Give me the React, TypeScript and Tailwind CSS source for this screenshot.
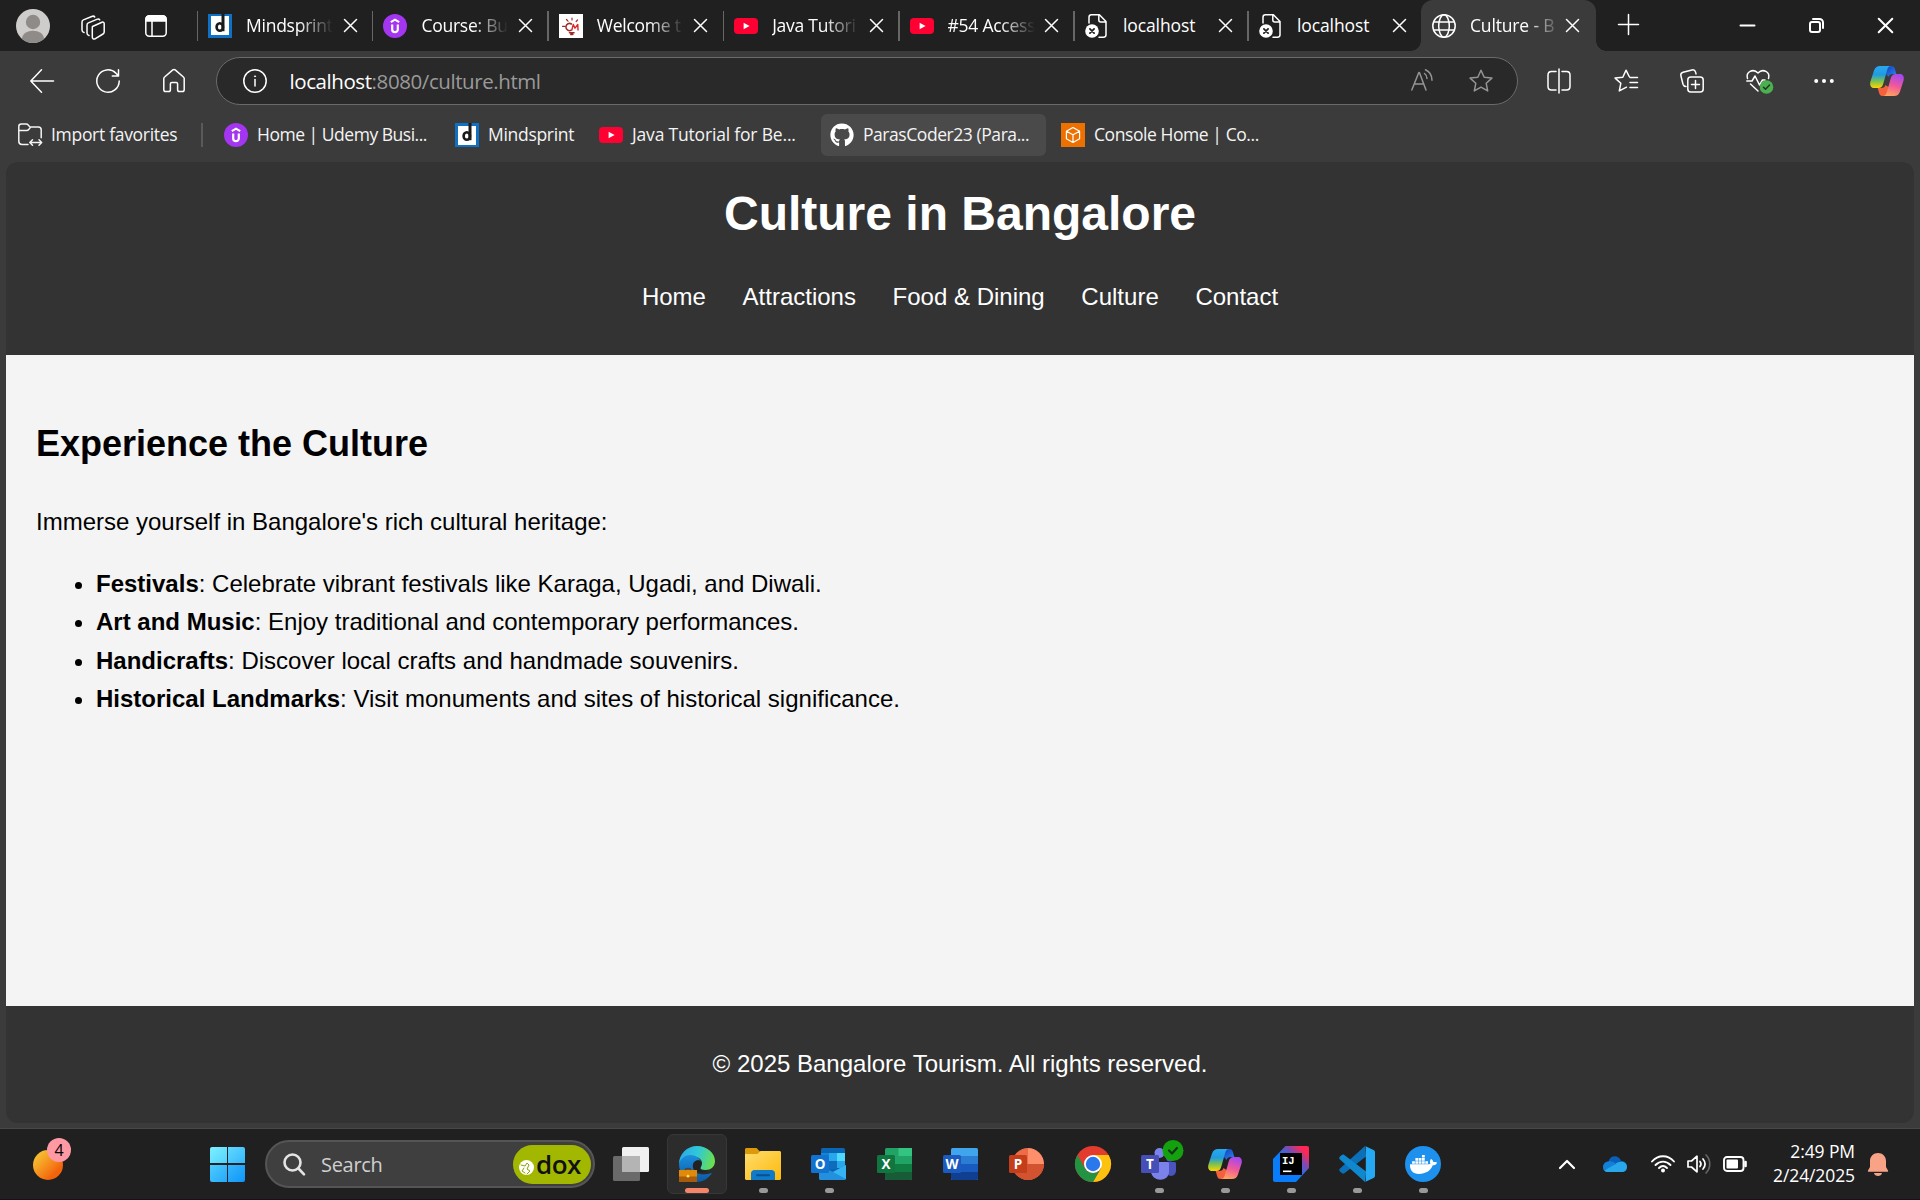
import type { ReactNode } from "react";
import { FaGithub, FaDocker } from "react-icons/fa";

type IconProps = { w?: number; h?: number; vb?: string; className?: string; children: ReactNode };

function Icon({ w = 24, h = 24, vb, className = "", children }: IconProps) {
  return (
    <svg
      width={w}
      height={h}
      viewBox={vb ?? `0 0 ${w} ${h}`}
      fill="none"
      stroke="currentColor"
      strokeWidth="1.5"
      strokeLinecap="round"
      strokeLinejoin="round"
      className={`block shrink-0 overflow-visible ${className}`}
    >
      {children}
    </svg>
  );
}

/* ---------- favicons ---------- */

function MindsprintIcon() {
  return (
    <div className="relative flex h-6 w-6 shrink-0 items-center justify-center bg-[#0f70c4]">
      <div className="h-[19px] w-[18px] bg-white" />
      <Icon className="absolute inset-0">
        <path d="M15 0v17.2" stroke="#1b1b1b" strokeWidth="3" strokeLinecap="butt" />
        <ellipse cx="11.800" cy="13" rx="3.200" ry="3.800" stroke="#1b1b1b" strokeWidth="2.600" />
      </Icon>
    </div>
  );
}

function UdemyIcon() {
  return (
    <Icon>
      <circle cx="12" cy="12" r="12" fill="#a435f0" stroke="none" />
      <path d="M7.800 8.200 12 5.600l4.200 2.600" stroke="#fff" strokeWidth="2" strokeLinecap="butt" strokeLinejoin="miter" />
      <path d="M9.200 10.600v4.800c0 3.600 5.600 3.600 5.600 0v-4.800" stroke="#fff" strokeWidth="2.200" strokeLinecap="butt" />
    </Icon>
  );
}

function BulbIcon() {
  return (
    <Icon className="bg-white">
      <g stroke="#9b2c2c" strokeWidth="1.200">
        <path d="M13 4v2M7.500 5.500 9 7.200M3.500 12.300h2.700M18.500 6l-1.400 1.600" />
        <path d="M12.500 10a3.600 3.600 0 1 0-.5 6.300" strokeWidth="1.500" />
        <path d="M12.800 16 14.300 10.500l1.700 3.700 2.800-3.700.2 5.500" stroke="#dc2626" strokeWidth="1.400" />
        <path d="M10.500 18.800h4.500M11.800 20.400h2" strokeWidth="1.600" />
      </g>
    </Icon>
  );
}

function YouTubeIcon() {
  return (
    <Icon>
      <rect x="0" y="4" width="24" height="16" rx="4" fill="#ff0033" stroke="none" />
      <path d="M9.600 8.800v6.400l6-3.200z" fill="#fff" stroke="none" />
    </Icon>
  );
}

function BrokenPageIcon() {
  return (
    <Icon>
      <path d="M4 9V3.200C4 1.800 5 .8 6.400.8h8L21 7.600v13.200c0 1.400-1 2.400-2.400 2.400H14M13.800 1v5c0 1.200.8 2 2 2h5" />
      <circle cx="7" cy="17" r="6.800" fill="#fff" stroke="none" />
      <path d="m4.900 14.900 4.200 4.200m0-4.200-4.200 4.200" stroke="#222" strokeWidth="1.800" />
    </Icon>
  );
}

function GlobeIcon() {
  return (
    <Icon>
      <circle cx="12" cy="12" r="11.200" />
      <ellipse cx="12" cy="12" rx="5.300" ry="11.200" />
      <path d="M1.600 8h20.800M1.600 16h20.800" />
    </Icon>
  );
}

function AwsIcon() {
  return (
    <Icon className="bg-[#ed7100]">
      <path d="m12 4.500 6.600 3.700v7.600L12 19.500l-6.600-3.700V8.200zM5.400 8.200l6.600 3.600 6.600-3.600M12 11.800v7.700" stroke="#fff" strokeWidth="1.200" />
    </Icon>
  );
}

function CopilotIcon({ w = 34, h = 30, id }: { w?: number; h?: number; id: string }) {
  return (
    <Icon w={w} h={h} vb="0 0 34 30">
      <defs>
        <linearGradient id={`${id}a`} x1="0" y1="0" x2="0" y2="1">
          <stop offset="0" stopColor="#2aa9f0" />
          <stop offset=".4" stopColor="#1f9be0" />
          <stop offset=".7" stopColor="#7fc24e" />
          <stop offset="1" stopColor="#ffd400" />
        </linearGradient>
        <linearGradient id={`${id}b`} x1=".6" y1="0" x2=".3" y2="1">
          <stop offset="0" stopColor="#a548f0" />
          <stop offset=".5" stopColor="#f0589a" />
          <stop offset="1" stopColor="#ffa45c" />
        </linearGradient>
        <linearGradient id={`${id}c`} x1="0" y1="0" x2="1" y2="1">
          <stop offset="0" stopColor="#1236b8" />
          <stop offset="1" stopColor="#2a8cf0" />
        </linearGradient>
      </defs>
      <g stroke="none">
        <path d="M14 0h7.500c2 0 2.800 1.200 3.400 3l1.400 5h-3.600c-2.400 0-3.600 1.200-4.200 3L16 8z" fill={`url(#${id}c)`} />
        <path d="M20 30h-7.500c-2 0-2.800-1.200-3.400-3l-1.400-5h3.600c2.400 0 3.600-1.200 4.200-3L20 22z" fill="#f5603c" />
        <path d="M10 0h11c-2 0-3 1.400-3.700 3.500l-4 14c-.8 3-2.200 4.500-5 4.500H4C1 22-.3 19.500.3 16L4 4.500C5 1.500 7 0 10 0z" fill={`url(#${id}a)`} />
        <path d="M24 30H13c2 0 3-1.400 3.700-3.500l4-14c.8-3 2.200-4.500 5-4.500H30c3 0 4.300 2.500 3.700 6L30 25.500c-1 3-3 4.500-6 4.500z" fill={`url(#${id}b)`} />
      </g>
    </Icon>
  );
}

/* ---------- tab strip ---------- */

const tabs: { title: string; icon: ReactNode; fade: boolean }[] = [
  { title: "Mindsprint", icon: <MindsprintIcon />, fade: true },
  { title: "Course: Bu", icon: <UdemyIcon />, fade: true },
  { title: "Welcome t", icon: <BulbIcon />, fade: true },
  { title: "Java Tutori", icon: <YouTubeIcon />, fade: true },
  { title: "#54 Access", icon: <YouTubeIcon />, fade: true },
  { title: "localhost", icon: <BrokenPageIcon />, fade: false },
  { title: "localhost", icon: <BrokenPageIcon />, fade: false },
];

function CloseX({ className = "" }: { className?: string }) {
  return (
    <Icon w={13} h={13} className={className}>
      <path d="m.5.5 12 12m0-12-12 12" />
    </Icon>
  );
}

function TabStrip() {
  return (
    <div className="flex h-[51px] items-stretch bg-[#202020]">
      <div className="flex w-[196.500px] items-center">
        <Icon w={34} h={34} className="ml-4">
          <circle cx="17" cy="17" r="17" fill="#cfcdcb" stroke="none" />
          <circle cx="17" cy="13" r="7.200" fill="#8f8b89" stroke="none" />
          <path d="M6 30c0-11 22-11 22 0a17 17 0 0 1-22 0z" fill="#8f8b89" stroke="none" />
        </Icon>
        <Icon w={24} h={24} className="mt-1 ml-[31px]">
          <path d="m11.500 10.500 9.500-4.200c1.200-.5 2.200.1 2.200 1.400v8.300c0 .9-.4 1.600-1.200 2l-8 4.800c-1.300.7-2.700 0-2.700-1.500v-9c0-.8 0-1.500.2-1.800z" />
          <path d="M8 19.500c-1.200-.3-2-1.200-2-2.500V9.200c0-1 .4-1.900 1.400-2.300l9-3.800c1-.4 1.800-.1 2.300.7" />
          <path d="M3 16.500c-1.200-.3-2-1.200-2-2.500V6.200c0-1 .4-1.900 1.400-2.300l9-3.600c1-.4 1.800-.1 2.300.7" />
        </Icon>
        <Icon w={22} h={22} className="ml-10">
          <rect x=".8" y=".8" width="20.400" height="20.400" rx="3.500" />
          <path d="M1 6V4.500C1 2 2.200 1 4.500 1h13C19.800 1 21 2 21 4.500V6z" fill="#fff" />
          <path d="M7 6v15" />
        </Icon>
      </div>
      {tabs.map((t, i) => (
        <div key={i} className={i < 5 ? "flex w-[175.400px] items-center" : "flex w-[174px] items-center"}>
          <div className="h-[30px] w-[1.500px] bg-[#666]" />
          <div className="ml-2.5">{t.icon}</div>
          <div
            className={
              t.fade
                ? "ml-[14px] w-[87px] text-[17.500px] tracking-[-0.250px] whitespace-nowrap [mask-image:linear-gradient(to_right,#000_60%,transparent_100%)]"
                : "ml-[14px] w-[87px] text-[17.500px] tracking-[-0.100px] whitespace-nowrap"
            }
          >
            {t.title}
          </div>
          <CloseX className={i < 5 ? "ml-[10.500px]" : "ml-[9px]"} />
        </div>
      ))}
      <div className="relative flex w-[175px] items-center rounded-t-[12px] bg-[#3b3b3b]">
        <div className="absolute bottom-0 -left-2.5 h-2.5 w-2.5 bg-[radial-gradient(circle_at_0_0,#202020_9.500px,#3b3b3b_10px)]" />
        <div className="absolute -right-2.5 bottom-0 h-2.5 w-2.5 bg-[radial-gradient(circle_at_100%_0,#202020_9.500px,#3b3b3b_10px)]" />
        <div className="ml-[10.500px]">
          <GlobeIcon />
        </div>
        <div className="ml-[14px] w-[87px] text-[17.500px] tracking-[-0.150px] whitespace-nowrap [mask-image:linear-gradient(to_right,#000_65%,transparent_105%)]">
          Culture - B
        </div>
        <CloseX className="ml-[9px]" />
      </div>
      <div className="flex flex-1 items-center">
        <Icon w={21} h={21} className="-mt-0.5 ml-[21.500px]">
          <path d="M10.500.5v20M.5 10.500h20" />
        </Icon>
        <Icon w={15} h={15} className="ml-[101px]">
          <path d="M.5 7.500h14" strokeWidth="2" />
        </Icon>
        <Icon w={15} h={15} className="ml-[54px]">
          <rect x="1" y="4" width="10" height="10" rx="2" strokeWidth="2" />
          <path d="M4 1h6.500A3.500 3.500 0 0 1 14 4.500V10" strokeWidth="2" />
        </Icon>
        <Icon w={15} h={15} className="ml-[54px]">
          <path d="m.7.700 13.600 13.600m0-13.600L.7 14.300" strokeWidth="2" />
        </Icon>
      </div>
    </div>
  );
}

/* ---------- toolbar ---------- */

const starPath = "m12 1.200 3.200 7 7.700.9-5.700 5.200 1.500 7.600L12 18.200l-6.700 3.700 1.500-7.600L1.100 9.100l7.700-.9z";

function Toolbar() {
  return (
    <div className="flex h-[62px] items-center pb-[1.500px]">
      <Icon w={24} h={24} className="ml-[29.500px]">
        <path d="M11.500.800.800 12l10.700 11.200M.8 12h22.700" />
      </Icon>
      <Icon w={24} h={24} className="ml-[42px]">
        <path d="M23.200 12A11.200 11.200 0 1 1 20 4.200L22.500 7M22.500.800V7h-6.200" />
      </Icon>
      <Icon w={22} h={24} className="ml-[43px]">
        <path d="M.8 9.600c0-.7.3-1.200.8-1.600L9.800.9c.8-.6 1.600-.6 2.400 0L20.400 8c.5.400.8.900.8 1.600v11.200c0 1-.8 1.800-1.800 1.800h-3c-1 0-1.800-.8-1.800-1.800v-6c0-.8-.6-1.400-1.400-1.400H8.800c-.8 0-1.400.6-1.400 1.400v6c0 1-.8 1.800-1.800 1.800h-3c-1 0-1.800-.8-1.800-1.800z" />
      </Icon>
      <div className="ml-[31px] flex h-12 w-[1302px] items-center rounded-full border-[1.500px] border-[#6a6a6a] bg-[#292929]">
        <Icon w={24} h={24} className="ml-[26px]">
          <circle cx="12" cy="12" r="11.200" />
          <path d="M12 10.500v6.500" />
          <circle cx="12" cy="7.300" r=".6" fill="currentColor" strokeWidth=".8" />
        </Icon>
        <div className="ml-[23px] flex-1 text-[20.500px] tracking-[-0.420px] text-[#9a9a9a]">
          <span className="text-white">localhost</span>:8080/culture.html
        </div>
        <Icon w={22} h={22} className="-mt-0.5 text-[#959595]">
          <path d="M.8 21 7.800 3.500h.6L15 21M3.500 15h9M13.500 4.500c1.700 1.200 2.500 2.800 2.500 5M14.500.8c3.700 1.700 6.500 5.500 6.500 10.500" />
        </Icon>
        <Icon w={24} h={24} className="mr-[24px] ml-[36px] text-[#959595]">
          <path d={starPath} />
        </Icon>
      </div>
      <Icon w={24} h={24} className="ml-[29.500px]">
        <path d="M9 2.500H4.500C2.500 2.500 1 4 1 6v11.500c0 2 1.500 3.500 3.500 3.500H9M15 2.500h4.500c2 0 3.500 1.500 3.500 3.500v11.500c0 2-1.500 3.500-3.500 3.500H15M12 0v24" />
      </Icon>
      <Icon w={24} h={24} className="ml-[43px]">
        <path d="M12.500 18.200 5.300 21.900l1.500-7.600-5.700-5.200 7.700-.9L12 1.200l3.200 6.300M16 8.500h7.500M16 13.500h7.500M16 18.500h7.500" />
      </Icon>
      <Icon w={24} h={24} className="ml-[42px]">
        <rect x="7.800" y="8" width="15.400" height="15" rx="3" />
        <path d="M15.500 11.500v8M11.500 15.500h8M6 17.500c-1.500 0-2.500-.6-3-2.200L.9 6.800C.5 5 1.300 3.700 3 3.200L12 .9c1.800-.4 3 .3 3.500 2l.5 2" />
      </Icon>
      <Icon w={24} h={24} className="ml-[42px]">
        <path d="M1.500 9.500C-.5 3 7-1 12 4c5-5 12.500-1 10.500 5.500M4.500 15l7.500 7M.8 12H6l3-5 4.500 9 3-5h2.500" />
        <circle cx="20.500" cy="18" r="6.800" fill="#4caf50" stroke="none" />
        <path d="m17.500 18.200 2 2 4-4.200" stroke="#1f3a20" />
      </Icon>
      <Icon w={20} h={6} className="ml-[44px]">
        <g fill="currentColor" stroke="none">
          <circle cx="2.200" cy="3" r="2" />
          <circle cx="10" cy="3" r="2" />
          <circle cx="17.800" cy="3" r="2" />
        </g>
      </Icon>
      <div className="ml-[35.500px]">
        <CopilotIcon id="bar" />
      </div>
    </div>
  );
}

/* ---------- favorites bar ---------- */

function Favorites() {
  return (
    <div className="flex h-[49px] items-start pt-[1px] text-[17.500px] whitespace-nowrap text-[#f4f4f4]">
      <div className="flex h-[42px] w-[183px] items-center pl-[18px]">
        <Icon w={24} h={24}>
          <path d="M10 21.500H4c-1.800 0-3.200-1.400-3.200-3.200V3.500C.8 2 1.800 1 3.300 1h5c.8 0 1.400.3 1.900.9l1.600 2h8.600c1.600 0 2.800 1.200 2.800 2.800v8M.8 7.500h8c.8 0 1.400-.3 1.900-.9l1.600-2" />
          <path d="M12 19.500h11.500M14.500 16.800 11.800 19.500l2.700 2.700M21 16.800l2.700 2.700-2.700 2.700" />
        </Icon>
        <span className="-mt-px ml-[9px] tracking-[-0.300px]">Import favorites</span>
      </div>
      <div className="mt-[9px] ml-[18px] h-6 w-[1.500px] bg-[#5a5a5a]" />
      <div className="ml-[21.500px] flex h-[42px] w-[231px] items-center">
        <UdemyIcon />
        <span className="-mt-px ml-[9px] tracking-[-0.480px]">Home | Udemy Busi...</span>
      </div>
      <div className="flex h-[42px] w-[144px] items-center">
        <MindsprintIcon />
        <span className="-mt-px ml-[9px] tracking-[-0.300px]">Mindsprint</span>
      </div>
      <div className="flex h-[42px] w-[222px] items-center">
        <YouTubeIcon />
        <span className="-mt-px ml-[9px] tracking-[-0.180px]">Java Tutorial for Be...</span>
      </div>
      <div className="flex h-[42px] w-[225px] items-center rounded-md bg-[#4a4a4a] pl-[9px]">
        <FaGithub size={24} color="#fff" className="shrink-0" />
        <span className="-mt-px ml-[9px] tracking-[-0.440px]">ParasCoder23 (Para...</span>
      </div>
      <div className="ml-[15px] flex h-[42px] items-center">
        <AwsIcon />
        <span className="-mt-px ml-[9px] tracking-[-0.430px]">Console Home | Co...</span>
      </div>
    </div>
  );
}

/* ---------- web page ---------- */

const points = [
  ["Festivals", "Celebrate vibrant festivals like Karaga, Ugadi, and Diwali."],
  ["Art and Music", "Enjoy traditional and contemporary performances."],
  ["Handicrafts", "Discover local crafts and handmade souvenirs."],
  ["Historical Landmarks", "Visit monuments and sites of historical significance."],
];

function CulturePage() {
  return (
    <div className="mx-1.5 flex h-[961px] flex-col overflow-hidden rounded-[12px] bg-[#333] font-['Liberation_Sans',Arial,sans-serif] text-[24px] leading-[1.6] text-black">
      <header className="h-[193px] shrink-0 pt-[14px] text-center text-white">
        <h1 className="text-[48px] leading-[76.800px] font-bold">Culture in Bangalore</h1>
        <nav className="mt-[25px] flex justify-center gap-[36.670px]">
          <span>Home</span>
          <span>Attractions</span>
          <span>Food &amp; Dining</span>
          <span>Culture</span>
          <span>Contact</span>
        </nav>
      </header>
      <main className="flex-1 bg-[#f4f4f4] px-[30px] pt-[59.900px]">
        <h2 className="text-[36px] leading-[57.600px] font-bold">Experience the Culture</h2>
        <p className="mt-[30.500px]">Immerse yourself in Bangalore's rich cultural heritage:</p>
        <ul className="mt-[23.400px] list-disc pl-[60px]">
          {points.map(([name, text]) => (
            <li key={name}>
              <strong className="font-bold">{name}</strong>: {text}
            </li>
          ))}
        </ul>
      </main>
      <footer className="h-[117px] shrink-0 pt-[39px] text-center text-white">
        © 2025 Bangalore Tourism. All rights reserved.
      </footer>
    </div>
  );
}

/* ---------- taskbar ---------- */

function OfficeBadge({ letter, color }: { letter: string; color: string }) {
  return (
    <g stroke="none">
      <rect x="0" y="9" width="18" height="18" rx="1.500" fill={color} />
      <text x="9" y="23" textAnchor="middle" fontSize="13.500" fontWeight="700" fill="#fff" fontFamily="Open Sans, sans-serif">
        {letter}
      </text>
    </g>
  );
}

function EdgeIcon() {
  return (
    <Icon w={36} h={36}>
      <defs>
        <linearGradient id="edgeTop" x1="0" y1=".3" x2="1" y2=".5">
          <stop offset="0" stopColor="#2aa8e8" />
          <stop offset=".5" stopColor="#30c8d8" />
          <stop offset="1" stopColor="#6be04a" />
        </linearGradient>
        <linearGradient id="edgeMid" x1="0" y1="0" x2="0" y2="1">
          <stop offset="0" stopColor="#1b8fdd" />
          <stop offset="1" stopColor="#0c59a4" />
        </linearGradient>
      </defs>
      <g stroke="none">
        <path d="M0 18C0 8 8 0 18 0s18 7 18 15c0 6-4.500 9-9.500 9-3 0-5-1-5-2s1.500-2 1.500-5-3-6-7-6C8 11 2 14 0 18z" fill="url(#edgeTop)" />
        <path d="M0 18c1-5 6-9 11-9 6 0 10 3.500 11 7-6-4-9 1-8 6 1.500 6 9 8 19 5-3 5-9 9-15 9C8 36 0 28 0 18z" fill="url(#edgeMid)" />
        <path d="M14 19c1.500-5 6-6 8-3.500 1 1.500.5 4-1 6.500-1 2 3 4 8 3-6 3-15 1-15-6z" fill="#222" />
        <rect x="0" y="24" width="18" height="12" fill="#e08a0c" />
        <rect x="0" y="30.500" width="18" height="5.500" fill="#a85b08" />
        <circle cx="9" cy="30.200" r="1.400" fill="#ffe066" />
      </g>
      <path d="M6.500 23.500c0-1.500 5-1.500 5 0" stroke="#6b3c06" />
    </Icon>
  );
}

function FolderIcon() {
  return (
    <Icon w={36} h={36}>
      <defs>
        <linearGradient id="folder" x1="0" y1="0" x2="1" y2="1">
          <stop offset="0" stopColor="#ffdd6e" />
          <stop offset="1" stopColor="#fdb90b" />
        </linearGradient>
      </defs>
      <g stroke="none">
        <path d="M0 3.500C0 2.700.7 2 1.500 2h10l4 4H34v6H0z" fill="#dc9a0a" />
        <path d="M0 8h12.500l3-3H34.500c.8 0 1.500.7 1.500 1.500v26c0 .8-.7 1.500-1.500 1.500h-33C.7 34 0 33.300 0 32.500z" fill="url(#folder)" />
        <path d="M6 34v-6.500C6 25.500 7.500 24 9.500 24h17c2 0 3.500 1.500 3.500 3.500V34z" fill="#0f7ac8" />
        <rect x="11" y="28.200" width="14" height="2" rx="1" fill="#0a4f93" />
      </g>
    </Icon>
  );
}

function OutlookIcon() {
  return (
    <Icon w={36} h={36}>
      <g stroke="none">
        <rect x="10" y="2" width="24" height="24" rx="1.500" fill="#0a66b4" />
        <rect x="10" y="7" width="8" height="8" fill="#1684d6" />
        <rect x="18" y="7" width="8" height="8" fill="#28a8ea" />
        <rect x="26" y="7" width="8" height="8" fill="#50d9ff" />
        <rect x="18" y="15" width="8" height="8" fill="#0f6cbd" />
        <rect x="26" y="15" width="8" height="7" fill="#28a8ea" />
        <path d="M8 19l14 7 13-7v13.500c0 .8-.7 1.500-1.500 1.500h-24C8.700 34 8 33.300 8 32.500z" fill="#2390de" />
        <path d="M22 26 35 19v14z" fill="#35b4f3" />
      </g>
      <OfficeBadge letter="O" color="#1272cf" />
    </Icon>
  );
}

function ExcelIcon() {
  return (
    <Icon w={36} h={36}>
      <g stroke="none">
        <rect x="8" y="2" width="27" height="32" rx="1.500" fill="#21a366" />
        <rect x="21.500" y="2" width="13.500" height="8" fill="#33c481" />
        <rect x="8" y="18" width="27" height="8" fill="#107c41" />
        <path d="M8 26h27v6.500c0 .8-.7 1.500-1.500 1.500h-24c-.8 0-1.500-.7-1.500-1.500z" fill="#185c37" />
      </g>
      <OfficeBadge letter="X" color="#10753f" />
    </Icon>
  );
}

function WordIcon() {
  return (
    <Icon w={36} h={36}>
      <g stroke="none">
        <rect x="8" y="2" width="27" height="32" rx="1.500" fill="#41a5ee" />
        <rect x="8" y="10" width="27" height="8" fill="#2b7cd3" />
        <rect x="8" y="18" width="27" height="8" fill="#185abd" />
        <path d="M8 26h27v6.500c0 .8-.7 1.500-1.500 1.500h-24c-.8 0-1.500-.7-1.500-1.500z" fill="#103f91" />
      </g>
      <OfficeBadge letter="W" color="#1b5abe" />
    </Icon>
  );
}

function PowerPointIcon() {
  return (
    <Icon w={36} h={36}>
      <g stroke="none">
        <path d="M19 18V2a16 16 0 1 0 16 16z" fill="#ed6c47" />
        <path d="M19 2a16 16 0 0 1 16 16H19z" fill="#ff8f6b" />
        <path d="M3 18h32a16 16 0 0 1-32 0z" fill="#d35230" />
      </g>
      <OfficeBadge letter="P" color="#c43e1c" />
    </Icon>
  );
}

function ChromeIcon() {
  return (
    <Icon w={36} h={36}>
      <g stroke="none">
        <circle cx="18" cy="18" r="18" fill="#e33b2e" />
        <path d="M18 9h15.590A18 18 0 0 1 18 36l7.800-13.500z" fill="#fdc10f" />
        <path d="M2.410 9l7.800 13.500A9 9 0 0 0 25.800 22.500L18 36A18 18 0 0 1 2.410 9z" fill="#229342" />
        <circle cx="18" cy="18" r="9" fill="#fff" />
        <circle cx="18" cy="18" r="7.200" fill="#2b78ec" />
      </g>
    </Icon>
  );
}

function TeamsIcon() {
  return (
    <Icon w={36} h={36}>
      <g stroke="none">
        <circle cx="29" cy="11.500" r="4" fill="#5059c9" />
        <path d="M24 16h9.500c.8 0 1.500.7 1.500 1.500v7c0 7-9 7-11 1z" fill="#4b53bc" />
        <circle cx="18.500" cy="7" r="5" fill="#7b83eb" />
        <path d="M10 16h16.500c.8 0 1.500.7 1.500 1.500v8c0 11-17 11-18 0z" fill="#7b83eb" />
      </g>
      <OfficeBadge letter="T" color="#464eb8" />
      <circle cx="32" cy="4.500" r="10.500" fill="#13a10e" stroke="none" />
      <path d="m28 4.500 3 3 5-5.500" stroke="#16351a" strokeWidth="2.200" />
    </Icon>
  );
}

function IntelliJIcon() {
  return (
    <Icon w={36} h={36}>
      <defs>
        <linearGradient id="ij" x1="0" y1="1" x2="1" y2="0">
          <stop offset=".45" stopColor="#087cfa" />
          <stop offset=".68" stopColor="#7a4bb5" />
          <stop offset=".86" stopColor="#fe2857" />
        </linearGradient>
      </defs>
      <g stroke="none">
        <path d="M12.500 0H34c1.200 0 2 .8 2 2v20L23 36H2c-1.200 0-2-.8-2-2V13z" fill="url(#ij)" />
        <rect x="7" y="7" width="22" height="22" fill="#000" />
        <text x="9" y="18" fontSize="10.500" fontWeight="700" fill="#fff" fontFamily="Liberation Mono, monospace">
          IJ
        </text>
        <rect x="10" y="24.500" width="8.500" height="1.600" fill="#fff" />
      </g>
    </Icon>
  );
}

function VsCodeIcon() {
  return (
    <Icon w={36} h={36}>
      <g stroke="none">
        <path d="M26 0 1 22.500c-1 1-1 2 0 3l1.800 1.600c.8.700 1.700.7 2.500.1L27 10.500z" fill="#0a70b8" />
        <path d="M26 36 1 13.500c-1-1-1-2 0-3L2.800 9c.8-.7 1.700-.7 2.500-.1L27 25.500z" fill="#1088d0" />
        <path d="M26 0l8.500 4c1 .5 1.500 1.200 1.500 2.200v23.600c0 1-.5 1.700-1.500 2.200L26 36c.6-.4.800-1 .8-2V2c0-1-.2-1.600-.8-2z" fill="#24a9f2" />
      </g>
    </Icon>
  );
}

function DockerIcon() {
  return (
    <div className="flex h-9 w-9 items-center justify-center rounded-full bg-[#1d91ed]">
      <FaDocker size={27} color="#fff" />
    </div>
  );
}

const apps: { name: string; icon: ReactNode; state: "active" | "running" | "idle" }[] = [
  { name: "Edge", icon: <EdgeIcon />, state: "active" },
  { name: "Explorer", icon: <FolderIcon />, state: "running" },
  { name: "Outlook", icon: <OutlookIcon />, state: "running" },
  { name: "Excel", icon: <ExcelIcon />, state: "idle" },
  { name: "Word", icon: <WordIcon />, state: "idle" },
  { name: "PowerPoint", icon: <PowerPointIcon />, state: "idle" },
  { name: "Chrome", icon: <ChromeIcon />, state: "idle" },
  { name: "Teams", icon: <TeamsIcon />, state: "running" },
  { name: "Copilot", icon: <CopilotIcon id="task" />, state: "running" },
  { name: "IntelliJ", icon: <IntelliJIcon />, state: "running" },
  { name: "VS Code", icon: <VsCodeIcon />, state: "running" },
  { name: "Docker", icon: <DockerIcon />, state: "running" },
];

function Taskbar() {
  return (
    <div className="flex h-[71px] items-center border-b border-[#1a0f18] bg-[#202020]">
      <div className="relative mb-[10px] ml-[33px] h-[42px] w-[38px]">
        <div className="absolute bottom-0 left-0 h-[30px] w-[30px] rounded-full bg-linear-to-br from-[#f5b82e] from-20% to-[#f2640c] to-75%" />
        <div className="absolute top-0 right-0 flex h-6 w-6 items-center justify-center rounded-full bg-[#ff99a4] text-[16px] text-black">
          4
        </div>
      </div>
      <div className="ml-[139px] grid h-[35px] w-[35px] grid-cols-2 gap-[1.500px]">
        <div className="rounded-tl-[2px] bg-linear-to-br from-[#7cf0ff] to-[#52d2ff]" />
        <div className="rounded-tr-[2px] bg-linear-to-br from-[#5fd8ff] to-[#35b8fb]" />
        <div className="rounded-bl-[2px] bg-linear-to-br from-[#4dcaff] to-[#22aafa]" />
        <div className="rounded-br-[2px] bg-linear-to-br from-[#34b6fb] to-[#0c96f8]" />
      </div>
      <div className="ml-5 flex h-12 w-[330px] items-center rounded-full border-2 border-[#555] bg-[#3f3f3f]">
        <Icon w={22} h={22} className="ml-4 text-[#e4e4e4]">
          <circle cx="9.500" cy="9.500" r="8" strokeWidth="2.600" />
          <path d="m15.500 15.500 5.500 5.800" strokeWidth="2.600" />
        </Icon>
        <span className="mt-0.5 ml-4 flex-1 text-[20px] tracking-[-0.300px] text-[#cfcfcf]">Search</span>
        <div className="mr-[2px] flex h-[39px] w-[78px] items-center rounded-full bg-[#a2b800] pl-[6px]">
          <Icon w={15} h={15} className="mt-1.5">
            <circle cx="7.500" cy="7.500" r="7.500" fill="#fff" stroke="none" />
            <path d="M2 5l4 1 2-3 2 2-2 4 3 2-3 3M5 8l-2 3 3 2" stroke="#8fa400" strokeWidth="1" />
          </Icon>
          <span className="ml-[2px] font-['Open_Sans',sans-serif] text-[26px] leading-none font-semibold tracking-[-0.500px] text-[#111]">
            dox
          </span>
        </div>
      </div>
      <Icon w={36} h={35} className="ml-[18px]">
        <g stroke="none">
          <rect x="9" y="0" width="27" height="25" rx="1.500" fill="#f0f0f0" />
          <rect x="0" y="9" width="27" height="25" rx="1.500" fill="#6a6a6a" />
          <path d="M9 9h18v16H9z" fill="#b4b4b4" />
        </g>
      </Icon>
      <div className="ml-[15px] flex">
        {apps.map((a) => (
          <div key={a.name} className="flex w-[66px] justify-center">
            <div
              className={
                a.state === "active"
                  ? "relative flex h-[60px] w-[60px] items-center justify-center rounded-md border-[1.500px] border-[#373737] bg-[#2c2c2c]"
                  : "relative flex h-[60px] w-[60px] items-center justify-center"
              }
            >
              {a.icon}
              {a.state === "active" && <div className="absolute bottom-0 h-[5px] w-6 rounded-full bg-[#f4846a]" />}
              {a.state === "running" && <div className="absolute bottom-[1px] h-[5px] w-[9px] rounded-full bg-[#999]" />}
            </div>
          </div>
        ))}
      </div>
      <div className="flex flex-1 items-center">
        <Icon w={16} h={9} className="ml-[103px]">
          <path d="m1 8 7-7 7 7" strokeWidth="2.200" />
        </Icon>
        <Icon w={24} h={16} className="ml-7">
          <g stroke="none">
            <path d="M5.500 5.500C7-1 16-1.500 18 5c4 0 6 2.500 6 5.500L12 12 0 11c0-3.500 2.500-5.500 5.500-5.500z" fill="#0a5fb8" />
            <path d="M5.500 5.500c3-.5 5 .5 7 2L4 16c-5.500-.5-5.500-9.500 1.500-10.500z" fill="#1380d8" />
            <path d="M12.500 8c3-3.500 11.500-3.500 11.500 3 0 3-2 5-5 5H5c-1.500 0-2.500-.5-3.500-1.500z" fill="#28a8ea" />
          </g>
        </Icon>
        <Icon w={24} h={18} className="ml-6">
          <path d="M1 6.500C7-.5 17-.5 23 6.500M4.500 10c4.500-4.500 10.500-4.500 15 0M8 13c2.500-2.500 5.500-2.500 8 0" strokeWidth="1.900" />
          <circle cx="12" cy="15.500" r="2" fill="currentColor" stroke="none" />
        </Icon>
        <Icon w={24} h={18} className="ml-3">
          <path d="M1 6h3.500L10 1.200v15.600L4.500 12H1z" strokeWidth="1.700" />
          <path d="M13 6.500c1.200 1.500 1.200 3.500 0 5M16 4c2.500 3 2.500 7 0 10" strokeWidth="1.700" />
          <path d="M19 0c5 5 5 13 0 18" stroke="#666" strokeWidth="1.700" />
        </Icon>
        <Icon w={24} h={16} className="ml-3">
          <rect x="1" y="1" width="19.500" height="14" rx="3" strokeWidth="1.900" />
          <rect x="3.500" y="3.500" width="11.500" height="9" rx="1" fill="currentColor" stroke="none" />
          <path d="M22.500 6v4" strokeWidth="2.600" />
        </Icon>
        <div className="-mt-0.5 flex w-[108px] flex-col text-right text-[17.500px] leading-6 tracking-[-0.100px]">
          <span>2:49 PM</span>
          <span>2/24/2025</span>
        </div>
        <Icon w={20} h={23} className="ml-[13px]">
          <g fill="#f9a386" stroke="none">
            <path d="M10 0c4.500 0 8 3.500 8 8v6l2 3.500c.3.700 0 1.300-.8 1.300H.8c-.8 0-1.100-.6-.8-1.300L2 14V8c0-4.500 3.500-8 8-8z" />
            <path d="M6 20h8c-.5 4-7.500 4-8 0z" />
          </g>
        </Icon>
      </div>
    </div>
  );
}

export default function App() {
  return (
    <div className="flex h-[1200px] w-[1920px] flex-col overflow-hidden bg-[#3b3b3b] font-['Open_Sans','Noto_Sans',sans-serif] text-white">
      <TabStrip />
      <Toolbar />
      <Favorites />
      <CulturePage />
      <div className="h-[6px] border-b border-[#484848]" />
      <Taskbar />
    </div>
  );
}
